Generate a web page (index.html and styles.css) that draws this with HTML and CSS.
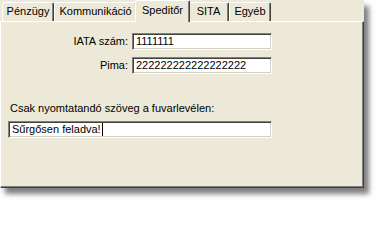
FILE: index.html
```html
<!DOCTYPE html>
<html lang="hu">
<head>
<meta charset="utf-8">
<title>Speditőr</title>
<link rel="stylesheet" href="styles.css">
</head>
<body>
<div class="window">
  <div class="tabs">
    <div class="tab tab-penzugy">Pénzügy</div>
    <div class="tab tab-komm">Kommunikáció</div>
    <div class="tab tab-sped active">Speditőr</div>
    <div class="tab tab-sita">SITA</div>
    <div class="tab tab-egyeb">Egyéb</div>
  </div>
  <div class="panel">
    <div class="form">
      <div class="label">IATA szám:</div>
      <div class="edit">1111111</div>
      <div class="label">Pima:</div>
      <div class="edit">222222222222222222</div>
    </div>
    <div class="note-label">Csak nyomtatandó szöveg a fuvarlevélen:</div>
    <div class="edit edit-wide">Sűrgősen feladva!<span class="caret"></span></div>
  </div>
</div>
</body>
</html>
```
FILE: styles.css
```css
html, body {
  margin: 0;
  padding: 0;
  background: #ffffff;
}
body {
  width: 378px;
  height: 200px;
  overflow: hidden;
}
.window {
  width: 364px;
  height: 188px;
  background: #ece9d8;
  box-shadow: 5px 6px 5px rgba(0, 0, 0, 0.5);
  display: flex;
  flex-direction: column;
  font-family: "Liberation Sans", Arial, sans-serif;
  font-size: 11px;
  color: #000;
}
.tabs {
  display: flex;
  align-items: flex-end;
  height: 21px;
  padding-left: 2px;
  position: relative;
  z-index: 2;
}
.tab {
  box-sizing: border-box;
  height: 19px;
  border-top: 1px solid #ffffff;
  border-left: 1px solid #ffffff;
  border-right: 1px solid #404040;
  box-shadow: inset -1px 0 #808080;
  border-radius: 2px 2px 0 0;
  background: #ece9d8;
  text-align: center;
  line-height: 17px;
  white-space: nowrap;
}
.tab-penzugy { width: 52px; }
.tab-komm { width: 83px; }
.tab-sped { width: 55px; }
.tab-sita { width: 41px; }
.tab-egyeb { width: 42px; }
.tab.active {
  height: 22px;
  margin: 0 -2px -1px -2px;
  line-height: 18px;
  position: relative;
  z-index: 3;
}
.panel {
  flex: 1;
  box-sizing: border-box;
  border-top: 1px solid #ffffff;
  border-left: 1px solid #ffffff;
  border-right: 1px solid #404040;
  border-bottom: 1px solid #404040;
  box-shadow: inset -1px -1px #808080;
  padding-top: 11px;
}
.form {
  display: grid;
  grid-template-columns: 127px 140px;
  column-gap: 4px;
  row-gap: 7px;
  align-items: center;
}
.label {
  text-align: right;
  line-height: 13px;
}
.edit {
  box-sizing: border-box;
  height: 17px;
  background: #ffffff;
  border-top: 1px solid #808080;
  border-left: 1px solid #808080;
  border-right: 1px solid #ffffff;
  border-bottom: 1px solid #ffffff;
  box-shadow: inset 1px 1px #404040, inset -1px -1px #d4d0c8;
  padding-left: 3px;
  line-height: 15px;
  white-space: nowrap;
  overflow: hidden;
  display: flex;
  align-items: center;
}
.note-label {
  margin-top: 28px;
  padding-left: 9px;
  line-height: 13px;
}
.edit-wide {
  width: 264px;
  margin-left: 7px;
  margin-top: 6px;
}
.caret {
  display: inline-block;
  width: 1px;
  height: 13px;
  background: #000;
  margin-left: 1px;
}
```
